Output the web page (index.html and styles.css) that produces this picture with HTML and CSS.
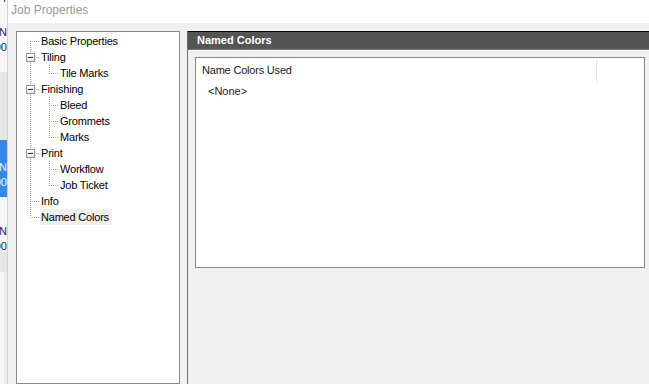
FILE: index.html
```html
<!DOCTYPE html>
<html lang="en">
  <head>
    <meta charset="UTF-8" />
    <meta name="viewport" content="width=device-width, initial-scale=1.0" />
    <title>Job Properties</title>
    <link rel="stylesheet" href="styles.css">
  </head>
  <body>
    <div class="screen">
      <div class="behind">
        <div class="bg-block bg-a">
          <div class="bg-cut">r</div>
          <div class="bg-text">N</div>
          <div class="bg-text">00</div>
        </div>
        <div class="bg-block bg-b"></div>
        <div class="bg-block bg-c">
          <div class="bg-text">N</div>
          <div class="bg-text">00</div>
        </div>
        <div class="bg-block bg-d">
          <div class="bg-text">N</div>
          <div class="bg-text">00</div>
        </div>
        <div class="bg-block bg-e"></div>
        <div class="bg-block bg-f"></div>
      </div>

      <div class="dialog">
        <div class="titlebar">Job Properties</div>

        <div class="dialog-body">
          <div class="tree">
            <div class="row"><span class="g g-first"></span><span class="label">Basic Properties</span></div>
            <div class="row"><span class="g g-tee"><span class="box"></span></span><span class="label">Tiling</span></div>
            <div class="row"><span class="g g-pipe"></span><span class="g g-last"></span><span class="label">Tile Marks</span></div>
            <div class="row"><span class="g g-tee"><span class="box"></span></span><span class="label">Finishing</span></div>
            <div class="row"><span class="g g-pipe"></span><span class="g g-tee"></span><span class="label">Bleed</span></div>
            <div class="row"><span class="g g-pipe"></span><span class="g g-tee"></span><span class="label">Grommets</span></div>
            <div class="row"><span class="g g-pipe"></span><span class="g g-last"></span><span class="label">Marks</span></div>
            <div class="row"><span class="g g-tee"><span class="box"></span></span><span class="label">Print</span></div>
            <div class="row"><span class="g g-pipe"></span><span class="g g-tee"></span><span class="label">Workflow</span></div>
            <div class="row"><span class="g g-pipe"></span><span class="g g-last"></span><span class="label">Job Ticket</span></div>
            <div class="row"><span class="g g-tee"></span><span class="label">Info</span></div>
            <div class="row"><span class="g g-last"></span><span class="label selected">Named Colors</span></div>
          </div>

          <div class="page">
            <div class="page-header">Named Colors</div>
            <div class="page-content">
              <div class="list">
                <div class="list-head">
                  <div class="col">Name Colors Used</div>
                </div>
                <div class="list-item">&lt;None&gt;</div>
              </div>
            </div>
          </div>
        </div>
      </div>
    </div>
  </body>
</html>
```

FILE: styles.css
```css
body {
  margin: 0;
  padding: 0;
  font-family: "Liberation Sans", Arial, sans-serif;
  font-size: 11px;
  color: #000;
  background: #f0f0f0;
  height: 100vh;
  overflow: hidden;
}

.screen {
  display: flex;
  height: 100vh;
}

/* window behind the dialog, only a sliver shows */
.behind {
  width: 7px;
  flex: none;
  display: flex;
  flex-direction: column;
  border-right: 1px solid #d2d2d2;
  overflow: hidden;
}

.bg-block {
  overflow: hidden;
  font-size: 11px;
  line-height: 15px;
  color: #1c1c66;
}

.bg-text,
.bg-cut {
  display: flex;
  justify-content: flex-end;
  white-space: nowrap;
}

.bg-a {
  height: 72px;
  padding-top: 0;
  box-sizing: border-box;
  background: #f7f7f7;
}

.bg-cut {
  margin-top: -9px;
  margin-bottom: 19px;
}

.bg-b {
  height: 68px;
  background: #e6e6e6;
}

.bg-c {
  height: 57px;
  padding-top: 20px;
  box-sizing: border-box;
  background: #3189ec;
  color: #eaf2ff;
}

.bg-d {
  height: 53px;
  padding-top: 27px;
  box-sizing: border-box;
  background: #f7f7f7;
}

.bg-e {
  height: 22px;
  background: #e6e6e6;
}

.bg-f {
  flex: 1;
  background: linear-gradient(to right, #f9f9f9, #ececec);
}

.dialog {
  flex: 1;
  display: flex;
  flex-direction: column;
  min-width: 0;
}

.titlebar {
  height: 23px;
  line-height: 20px;
  padding-left: 3px;
  background: #fff;
  color: #999;
  font-size: 12px;
  flex: none;
}

.dialog-body {
  flex: 1;
  display: flex;
  gap: 7px;
  padding: 8px 0 0 8px;
  min-height: 0;
}

/* tree view */
.tree {
  width: 164px;
  box-sizing: border-box;
  flex: none;
  background: #fff;
  border: 1px solid #828790;
  padding: 1px 0 0 4px;
}

.row {
  display: flex;
  height: 16px;
}

.g {
  display: block;
  width: 19px;
  height: 16px;
  flex: none;
  background-repeat: no-repeat;
}

.g-pipe {
  background-image: repeating-linear-gradient(to bottom, #a0a0a0 0 1px, transparent 1px 2px);
  background-size: 1px 16px;
  background-position: 9px 0;
}

.g-tee,
.g-first,
.g-last {
  background-image:
    repeating-linear-gradient(to bottom, #a0a0a0 0 1px, transparent 1px 2px),
    repeating-linear-gradient(to right, #a0a0a0 0 1px, transparent 1px 2px);
}

.g-tee {
  background-size: 1px 16px, 9px 1px;
  background-position: 9px 0, 11px 8px;
}

.g-first {
  background-size: 1px 8px, 9px 1px;
  background-position: 9px 8px, 11px 8px;
}

.g-last {
  background-size: 1px 9px, 9px 1px;
  background-position: 9px 0, 11px 8px;
}

.box {
  display: block;
  width: 9px;
  height: 9px;
  box-sizing: border-box;
  margin: 4px 0 0 5px;
  border: 1px solid #8e959e;
  background:
    linear-gradient(#2b3542, #2b3542) center / 5px 1px no-repeat,
    linear-gradient(#fff, #e9ebee);
}

.label {
  line-height: 16px;
  padding: 0 3px 0 1px;
  white-space: nowrap;
  letter-spacing: -0.2px;
}

.label.selected {
  background: #efefef;
}

/* right side page */
.page {
  flex: 1;
  min-width: 0;
  border-left: 1px solid #6e6e6e;
  display: flex;
  flex-direction: column;
}

.page-header {
  height: 17px;
  line-height: 17px;
  border-top: 1px solid #000;
  border-bottom: 1px solid #7a7a7a;
  background: #555;
  color: #fff;
  font-weight: bold;
  padding-left: 9px;
  flex: none;
}

.page-content {
  padding: 7px 4px 0 7px;
}

.list {
  height: 211px;
  box-sizing: border-box;
  border: 1px solid #828790;
  background: #fff;
  color: #1a1a1a;
}

.list-head {
  display: flex;
  height: 25px;
}

.col {
  width: 401px;
  height: 24px;
  margin-top: 1px;
  box-sizing: border-box;
  border-right: 1px solid #e5e5e5;
  padding-left: 6px;
  line-height: 23px;
  letter-spacing: -0.2px;
}

.list-item {
  height: 16px;
  line-height: 16px;
  padding-left: 12px;
}
```
